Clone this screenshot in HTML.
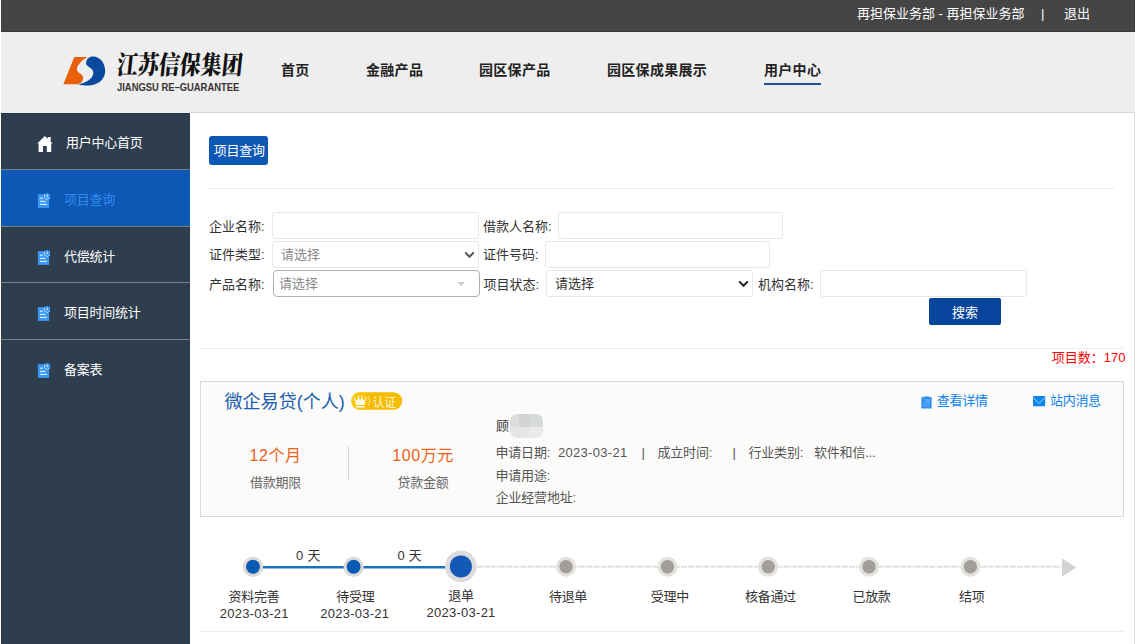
<!DOCTYPE html>
<html lang="zh-CN">
<head>
<meta charset="utf-8">
<title>项目查询</title>
<style>
*{box-sizing:border-box;margin:0;padding:0}
html,body{width:1139px;height:644px;overflow:hidden;background:#fff}
body{font-family:"Liberation Sans","Noto Sans CJK SC",sans-serif;font-size:13px;color:#333;position:relative}
.abs{position:absolute;white-space:nowrap}
#topbar{left:1px;top:0;width:1134px;height:32px;background:#454545;box-shadow:inset -1px 0 0 #3a3a3a, inset 0 -1px 0 #383838}
#header{left:1px;top:32px;width:1134px;height:81px;background:#eeeeee}
#hline{left:190px;top:112px;width:945px;height:1px;background:#d3d7d7}
#side{left:1px;top:113px;width:189px;height:531px;background:#2f3e4e;box-shadow:inset -1px 0 0 #27364a, inset 0 1px 0 #223246}
#rline{left:1134px;top:113px;width:1px;height:531px;background:#dddde9}
#lgcn{left:116px;top:17.5px;font-family:"Liberation Serif","Noto Serif CJK SC",serif;font-weight:900;font-size:21px;line-height:30px;color:#111;letter-spacing:0px;transform:skewX(-6deg) scaleY(1.22);transform-origin:left center}
#lgen{left:116px;top:47.5px;font-size:11px;font-weight:bold;line-height:14px;color:#3a3232;letter-spacing:0;transform:scaleX(.855);transform-origin:left center}
.tb{color:#fff;font-size:13px;line-height:16px;top:6px}
.nav{letter-spacing:.3px;font-size:14px;font-weight:bold;color:#222;top:28px;line-height:20px}
.sitem{left:0;width:189px;height:57px;border-bottom:1px solid #7b8088;color:#fff;font-size:13px}
.sitem span{position:absolute;left:63px;top:21px;line-height:18px;letter-spacing:-.25px}
.sitem.on{background:#0d57b5;color:#2f8bf0}
.lbl{font-size:13px;color:#333;line-height:18px}
.inp{border:1px solid #e7e7e7;border-radius:2.5px;background:#fff;height:27px}
#tabbtn{left:209px;top:136px;width:59px;height:29px;background:#0d57b5;border-radius:3px;color:#fff;font-size:13px;line-height:30px;text-align:center;letter-spacing:-.2px;padding-left:1.5px}
.sel span{position:absolute;left:8px;top:4px;font-size:13px;line-height:18px}
.sel .chev{position:absolute;right:3.5px;top:9px}
.sel2{border-color:#b0b0b0;border-radius:4px}
.sel2 span{position:absolute;left:5px;top:4px;font-size:13px;line-height:18px}
.sel2 i{position:absolute;right:14.5px;top:10.5px;border-left:4.2px solid transparent;border-right:4.2px solid transparent;border-top:4.4px solid #ccc}
#sbtn{left:929px;top:298px;width:72px;height:27px;background:#07459c;border-radius:2px;color:#fff;font-size:13px;line-height:29px;text-align:center}
#cnt{right:13.5px;top:348.5px;font-size:13px;line-height:18px;color:#f00}
#card{left:200px;top:381px;width:924px;height:136px;background:#fbfbf9;border:1px solid #d9d9d9}
#card .abs{margin:-1px 0 0 -1px}
#ctitle{left:24.5px;top:7.5px;font-size:18px;line-height:26px;color:#1b5cb0;letter-spacing:.05px}
#badge{left:152px;top:12px;width:52px;height:18px}
#badge span{position:absolute;left:20.6px;top:2.6px;font-size:12px;line-height:14px;color:#fff6d8;letter-spacing:-.4px}
.big{font-size:16px;line-height:24px;color:#ee5f1c;text-align:center;letter-spacing:.6px}
.sm{font-size:13px;line-height:18px;color:#666;text-align:center;letter-spacing:-.3px}
.inf{font-size:13px;line-height:18px;color:#555;letter-spacing:-.2px}
.lnk{font-size:13px;line-height:18px;color:#0f84ee;letter-spacing:-.3px}
.tlt{font-size:13px;fill:#333;font-family:"Liberation Sans","Noto Sans CJK SC",sans-serif;letter-spacing:-.3px}
.tld{letter-spacing:.25px}
.hr{height:1px;background:#eee}
</style>
</head>
<body>
<div id="topbar" class="abs">
  <div class="abs tb" style="left:856px">再担保业务部 - 再担保业务部</div>
  <div class="abs tb" style="left:1040px">|</div>
  <div class="abs tb" style="left:1063px">退出</div>
</div>
<div id="header" class="abs">
  <svg class="abs" style="left:0;top:0" width="260" height="81" viewBox="1 32 260 81">
    <path d="M74.3,57 L87.6,57 C82,60 77,65 76.9,69.6 C77,73.2 83,74 83.1,77.6 C83.2,81 81,83.6 78,84.3 L63.4,84.3 Z" fill="#e8600a"/>
    <path d="M93,56.4 C100,56.4 105.2,63 105.2,71 C105.2,80 97,85.6 88,85.6 C84,85.6 81,85.1 78.4,84.4 C84,83 93,80 93.3,73 C93.5,67 86,67.5 86,63 C86,59 89.5,56.4 93,56.4 Z" fill="#0a4a9e"/>
  </svg>
  <div class="abs" id="lgcn">江苏信保集团</div>
  <div class="abs" id="lgen">JIANGSU RE–GUARANTEE</div>
  <div class="abs nav" style="left:280px">首页</div>
  <div class="abs nav" style="left:365px">金融产品</div>
  <div class="abs nav" style="left:478px">园区保产品</div>
  <div class="abs nav" style="left:606px">园区保成果展示</div>
  <div class="abs nav" style="left:763px">用户中心</div>
  <div class="abs" style="left:763px;top:51.4px;width:57px;height:1.5px;background:#1a4f9c"></div>
</div>
<div id="hline" class="abs"></div>
<div id="side" class="abs">
  <div class="abs sitem" style="top:0"><svg class="abs ic" style="left:35px;top:20px" width="20" height="20" viewBox="36 133 20 20"><path d="M44.9,136.1 L47.3,138.6 L47.9,137 H50.7 V141.7 L52.7,143.6 H51.2 V151.9 H46.8 V146.1 H43 V151.9 H38.6 V143.6 H37.3 Z" fill="#fff"/></svg><span style="left:65px">用户中心首页</span></div>
  <div class="abs sitem on" style="top:57px"><svg class="abs ic" style="left:36px;top:22px" width="15" height="17" viewBox="37 249 15 17"><rect x="37.9" y="251.2" width="11.2" height="13.7" fill="#3a98f7"/><path d="M47.2,249.8 L50.1,251.3 V255 L47.2,256.7 L44.4,255 V251.3 Z" fill="#3a98f7"/><path d="M44.5,251.4 V255 L47.2,256.6 L50,255" fill="none" stroke="#c4defc" stroke-width=".8"/><ellipse cx="47.3" cy="253" rx=".65" ry="1.05" fill="#fff"/><rect x="40" y="254.6" width="2.9" height="1.15" fill="#dcebfd"/><rect x="40" y="257.8" width="5.4" height="1.15" fill="#dcebfd"/><rect x="40" y="260.8" width="7" height="1.15" fill="#dcebfd"/></svg><span>项目查询</span></div>
  <div class="abs sitem" style="top:114px;height:56px"><svg class="abs ic" style="left:36px;top:22px" width="15" height="17" viewBox="37 249 15 17"><rect x="37.9" y="251.2" width="11.2" height="13.7" fill="#3a98f7"/><path d="M47.2,249.8 L50.1,251.3 V255 L47.2,256.7 L44.4,255 V251.3 Z" fill="#3a98f7"/><path d="M44.5,251.4 V255 L47.2,256.6 L50,255" fill="none" stroke="#c4defc" stroke-width=".8"/><ellipse cx="47.3" cy="253" rx=".65" ry="1.05" fill="#fff"/><rect x="40" y="254.6" width="2.9" height="1.15" fill="#dcebfd"/><rect x="40" y="257.8" width="5.4" height="1.15" fill="#dcebfd"/><rect x="40" y="260.8" width="7" height="1.15" fill="#dcebfd"/></svg><span>代偿统计</span></div>
  <div class="abs sitem" style="top:170px"><svg class="abs ic" style="left:36px;top:22px" width="15" height="17" viewBox="37 249 15 17"><rect x="37.9" y="251.2" width="11.2" height="13.7" fill="#3a98f7"/><path d="M47.2,249.8 L50.1,251.3 V255 L47.2,256.7 L44.4,255 V251.3 Z" fill="#3a98f7"/><path d="M44.5,251.4 V255 L47.2,256.6 L50,255" fill="none" stroke="#c4defc" stroke-width=".8"/><ellipse cx="47.3" cy="253" rx=".65" ry="1.05" fill="#fff"/><rect x="40" y="254.6" width="2.9" height="1.15" fill="#dcebfd"/><rect x="40" y="257.8" width="5.4" height="1.15" fill="#dcebfd"/><rect x="40" y="260.8" width="7" height="1.15" fill="#dcebfd"/></svg><span>项目时间统计</span></div>
  <div class="abs sitem" style="top:227px;border-bottom:none"><svg class="abs ic" style="left:36px;top:22px" width="15" height="17" viewBox="37 249 15 17"><rect x="37.9" y="251.2" width="11.2" height="13.7" fill="#3a98f7"/><path d="M47.2,249.8 L50.1,251.3 V255 L47.2,256.7 L44.4,255 V251.3 Z" fill="#3a98f7"/><path d="M44.5,251.4 V255 L47.2,256.6 L50,255" fill="none" stroke="#c4defc" stroke-width=".8"/><ellipse cx="47.3" cy="253" rx=".65" ry="1.05" fill="#fff"/><rect x="40" y="254.6" width="2.9" height="1.15" fill="#dcebfd"/><rect x="40" y="257.8" width="5.4" height="1.15" fill="#dcebfd"/><rect x="40" y="260.8" width="7" height="1.15" fill="#dcebfd"/></svg><span>备案表</span></div>
</div>
<div id="rline" class="abs"></div>
<div id="main">
  <div class="abs" id="tabbtn">项目查询</div>
  <div class="abs hr" style="left:209px;top:188px;width:906px"></div>

  <div class="abs lbl" style="left:209px;top:217.5px">企业名称:</div>
  <div class="abs inp" style="left:272px;top:212px;width:207px"></div>
  <div class="abs lbl" style="left:483px;top:217.5px">借款人名称:</div>
  <div class="abs inp" style="left:558px;top:212px;width:225px"></div>

  <div class="abs lbl" style="left:209px;top:246px">证件类型:</div>
  <div class="abs inp sel" style="left:272px;top:241px;width:207px"><span style="color:#8a8a8a">请选择</span><svg class="chev" width="11" height="8" viewBox="0 0 11 8"><path d="M1.2,1.4 L5.5,5.8 L9.8,1.4" fill="none" stroke="#555" stroke-width="2"/></svg></div>
  <div class="abs lbl" style="left:483px;top:246px">证件号码:</div>
  <div class="abs inp" style="left:545px;top:241px;width:225px"></div>

  <div class="abs lbl" style="left:209px;top:275.5px">产品名称:</div>
  <div class="abs inp sel2" style="left:273px;top:270px;width:207px"><span style="color:#8a8a8a">请选择</span><i></i></div>
  <div class="abs lbl" style="left:483.5px;top:275.5px">项目状态:</div>
  <div class="abs inp sel" style="left:546px;top:270px;width:207px"><span style="color:#333">请选择</span><svg class="chev" width="11" height="8" viewBox="0 0 11 8"><path d="M1.2,1.4 L5.5,5.8 L9.8,1.4" fill="none" stroke="#222" stroke-width="2"/></svg></div>
  <div class="abs lbl" style="left:758px;top:275.5px">机构名称:</div>
  <div class="abs inp" style="left:820px;top:270px;width:207px"></div>

  <div class="abs" id="sbtn">搜索</div>
  <div class="abs hr" style="left:199px;top:348px;width:926px"></div>
  <div class="abs" id="cnt">项目数：170</div>
  <div class="abs" id="card">
    <div class="abs" id="ctitle">微企易贷(个人)</div>
    <div class="abs" id="badge"><svg class="abs" style="left:0;top:0" width="52" height="18" viewBox="0 0 52 18"><rect x="4" y="0.3" width="47.2" height="17.4" rx="8.7" fill="#f5bc03"/><circle cx="9.2" cy="9" r="9" fill="#fbc505"/><path d="M17.2,4 A9.2,9.2 0 0 1 17.2,14" fill="none" stroke="#fee68c" stroke-width="1"/><g transform="translate(0,.7)"><path d="M3.6,5.6 L6.2,8.4 L7.4,3.6 L9.2,7.8 L11,3.6 L12.2,8.4 L14.8,5.6 L13.4,12.2 H5 Z M5,13.2 H13.4 V14.8 H5 Z" fill="#fff"/><circle cx="3.7" cy="5.4" r=".8" fill="#fff"/><circle cx="7.4" cy="3.5" r=".8" fill="#fff"/><circle cx="11" cy="3.5" r=".8" fill="#fff"/><circle cx="14.7" cy="5.4" r=".8" fill="#fff"/></g></svg><span>认证</span></div>

    <div class="abs big" style="left:25.5px;width:100px;top:62.5px">12个月</div>
    <div class="abs sm" style="left:25.5px;width:100px;top:93px">借款期限</div>
    <div class="abs" style="left:148px;top:65px;width:1px;height:35px;background:#ddd3d3"></div>
    <div class="abs big" style="left:173px;width:100px;top:62.5px">100万元</div>
    <div class="abs sm" style="left:173px;width:100px;top:93px">贷款金额</div>

    <div class="abs" style="left:296px;top:35.5px;font-size:13px;line-height:18px;color:#333">顾</div>
    <svg class="abs" style="left:310px;top:32.5px" width="33" height="24" viewBox="0 0 33 24"><defs><clipPath id="bc"><rect x="0" y="0" width="33" height="24" rx="7" ry="7"/></clipPath></defs><g clip-path="url(#bc)"><rect x="0" y="0" width="9" height="13" fill="#dedddd"/><rect x="9" y="0" width="10" height="13" fill="#d3d1d1"/><rect x="19" y="0" width="14" height="13" fill="#d7dada"/><rect x="0" y="13" width="19" height="11" fill="#e6e5e5"/><rect x="19" y="13" width="14" height="11" fill="#eaeaea"/></g></svg>

    <div class="abs inf" style="left:295.5px;top:62.7px">申请日期:</div>
    <div class="abs inf" style="left:358px;top:62.7px;letter-spacing:.3px">2023-03-21</div>
    <div class="abs inf" style="left:441.4px;top:62.7px">|</div>
    <div class="abs inf" style="left:457.5px;top:62.7px">成立时间:</div>
    <div class="abs inf" style="left:532.6px;top:62.7px">|</div>
    <div class="abs inf" style="left:548.5px;top:62.7px">行业类别:</div>
    <div class="abs inf" style="left:614px;top:62.7px">软件和信...</div>
    <div class="abs inf" style="left:295.5px;top:86px">申请用途:</div>
    <div class="abs inf" style="left:295.7px;top:108.2px">企业经营地址:</div>

    <svg class="abs" style="left:721px;top:15px" width="11" height="13" viewBox="0 0 11 13"><path d="M0.4,1.2 H3 V0.4 H8 V1.2 H10.6 V12.6 H0.4 Z" fill="#2a8df0"/><rect x="2" y="3" width="7" height="8" fill="#56a6f5"/><rect x="2" y="6.6" width="7" height="1" fill="#3c98f3"/><rect x="2" y="8.8" width="7" height="1" fill="#3c98f3"/><circle cx="3.6" cy="4.8" r="1.1" fill="#2a8df0"/></svg>
    <div class="abs lnk" style="left:736.8px;top:10.8px">查看详情</div>
    <svg class="abs" style="left:832.9px;top:15.3px" width="13" height="11" viewBox="0 0 13 11"><rect x="0" y="0" width="12.2" height="10.3" rx="1.3" fill="#0c85ec"/><path d="M0.5,2.2 L6.1,7.3 L11.8,1.9" fill="none" stroke="#7cc0f7" stroke-width="1.1"/></svg>
    <div class="abs lnk" style="left:850px;top:10.8px">站内消息</div>
  </div>
  <svg class="abs" id="tl" style="left:190px;top:530px" width="945" height="114" viewBox="190 530 945 114">
    <line x1="462" y1="566.8" x2="1063" y2="566.8" stroke="#e1e1e1" stroke-width="2" stroke-dasharray="6.2 1.1"/>
    <line x1="253" y1="567.1999999999999" x2="460" y2="567.1999999999999" stroke="#1b71c2" stroke-width="2.4"/>
    <path d="M1062,558.6 L1076.5,567.6 L1062,576.8 Z" fill="#d4d4d4"/>
    <circle cx="253" cy="566.8" r="10.1" fill="#dddbd7"/><circle cx="253" cy="566.8" r="7" fill="#0a5bb5"/>
    <circle cx="353.6" cy="566.8" r="10.1" fill="#dddbd7"/><circle cx="353.6" cy="566.8" r="7" fill="#0a5bb5"/>
    <circle cx="460.9" cy="566.4" r="15.8" fill="#dcdcdc"/><circle cx="460.9" cy="566.4" r="11" fill="#1559b6"/>
    <circle cx="566" cy="566.8" r="10" fill="#e3e1dc"/><circle cx="566" cy="566.8" r="6.7" fill="#a29f99"/>
    <circle cx="667.5" cy="566.8" r="10" fill="#e3e1dc"/><circle cx="667.5" cy="566.8" r="6.7" fill="#a29f99"/>
    <circle cx="768.2" cy="566.8" r="10" fill="#e3e1dc"/><circle cx="768.2" cy="566.8" r="6.7" fill="#a29f99"/>
    <circle cx="869" cy="566.8" r="10" fill="#e3e1dc"/><circle cx="869" cy="566.8" r="6.7" fill="#a29f99"/>
    <circle cx="970.4" cy="566.8" r="10" fill="#e3e1dc"/><circle cx="970.4" cy="566.8" r="6.7" fill="#a29f99"/>
    <text x="254" y="601" text-anchor="middle" class="tlt">资料完善</text>
    <text x="254.2" y="618" text-anchor="middle" class="tlt tld">2023-03-21</text>
    <text x="355.4" y="601" text-anchor="middle" class="tlt">待受理</text>
    <text x="354.8" y="618" text-anchor="middle" class="tlt tld">2023-03-21</text>
    <text x="460.9" y="600" text-anchor="middle" class="tlt">退单</text>
    <text x="461.09999999999997" y="617" text-anchor="middle" class="tlt tld">2023-03-21</text>
    <text x="568.0" y="601" text-anchor="middle" class="tlt">待退单</text>
    <text x="669.8" y="601" text-anchor="middle" class="tlt">受理中</text>
    <text x="770.4" y="601" text-anchor="middle" class="tlt">核备通过</text>
    <text x="871.5" y="601" text-anchor="middle" class="tlt">已放款</text>
    <text x="971.7" y="601" text-anchor="middle" class="tlt">结项</text>
    <text x="308.4" y="560" text-anchor="middle" class="tlt tld">0 天</text>
    <text x="409.7" y="560" text-anchor="middle" class="tlt tld">0 天</text>
  </svg>
  <div class="abs hr" style="left:199px;top:631px;width:926px"></div>
</div>
</body>
</html>
